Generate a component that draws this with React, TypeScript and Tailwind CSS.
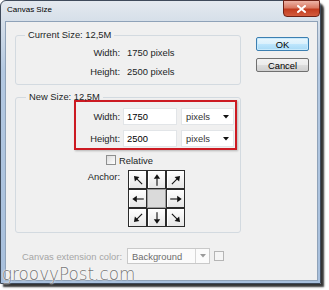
import React from "react";

const anchors: (number | null)[] = [-45, 0, 45, -90, null, 90, -135, 180, 135];

function Arrow({ deg }: { deg: number }) {
  return (
    <svg width="12" height="12" viewBox="0 0 12 12">
      <g transform={`rotate(${deg} 6 6)`}>
        <polygon points="6,0.3 9.2,4.8 2.8,4.8" fill="#111" />
        <rect x="5.45" y="4.4" width="1.1" height="7.4" fill="#111" />
      </g>
    </svg>
  );
}

function Caret({ color = "#111" }: { color?: string }) {
  return (
    <svg width="6" height="4" viewBox="0 0 6 4">
      <polygon points="0,0 6,0 3,3.5" fill={color} />
    </svg>
  );
}

export default function App() {
  return (
    <div className="relative w-[329px] h-[290px] bg-white overflow-hidden font-['Liberation_Sans',Arial,sans-serif] text-[9.4px] leading-[11px] text-[#1b1f26]">
      {/* window frame */}
      <div className="w-[321px] h-[284px] border border-[#3f4b5b] rounded-t-[6px] bg-[linear-gradient(180deg,#e4e9ef_0px,#d6dfe9_20px,#b3c8e1_70px,#a7bfdc_100%)] shadow-[3px_3px_2px_rgba(0,0,0,0.8)] flex flex-col">
        {/* title bar */}
        <div className="h-[20px] flex justify-between items-start">
          <span className="pl-[6px] pt-[4px] text-[8px] leading-[10px] text-black">Canvas Size</span>
          <div className="-mt-[1px] w-[37px] h-[17px] rounded-b-[4px] border border-[#6e2216] bg-[linear-gradient(180deg,#edb3a6_0%,#d97a63_45%,#c23c1f_55%,#d35c3d_100%)] flex items-center justify-center">
            <svg width="9" height="8" viewBox="0 0 9 8">
              <path d="M1 1 L8 7 M8 1 L1 7" stroke="#fff" strokeWidth="2" strokeLinecap="square" />
            </svg>
          </div>
        </div>

        {/* client area */}
        <div className="ml-[4px] w-[313px] h-[260px] border border-[#8fa2b8] bg-[#f0f0f0] flex flex-col pl-[9px] pt-[8px]">
          <div className="flex items-start">
            {/* Current size */}
            <fieldset className="w-[226px] h-[55px] border border-[#d3dae0] rounded-[3px]">
              <legend className="ml-[9px] px-[3px] leading-[10px]">Current Size: 12,5M</legend>
              <div className="mt-[3px] flex flex-col">
                <div className="h-[19px] flex items-center">
                  <span className="w-[104px] text-right">Width:</span>
                  <span className="ml-[7px]">1750 pixels</span>
                </div>
                <div className="h-[19px] flex items-center">
                  <span className="w-[104px] text-right">Height:</span>
                  <span className="ml-[7px]">2500 pixels</span>
                </div>
              </div>
            </fieldset>

            {/* buttons */}
            <div className="ml-[15px] mt-[7px] flex flex-col gap-[7px]">
              <div className="w-[53px] h-[14px] rounded-[2px] border border-[#3c7fb1] bg-[linear-gradient(180deg,#eaf6fd_0%,#d9f0fc_50%,#bee6fd_51%,#a7d9f5_100%)] shadow-[inset_0_0_0_1px_#c8e9fb] flex items-center justify-center text-black">
                OK
              </div>
              <div className="w-[53px] h-[14px] rounded-[2px] border border-[#707070] bg-[linear-gradient(180deg,#f2f2f2_0%,#ebebeb_50%,#dddddd_51%,#cfcfcf_100%)] flex items-center justify-center text-black">
                Cancel
              </div>
            </div>
          </div>

          {/* New size */}
          <fieldset className="mt-[7px] w-[226px] h-[141px] border border-[#d3dae0] rounded-[3px]">
            <legend className="ml-[10px] px-[3px] leading-[10px]">New Size: 12,5M</legend>

            <div className="-mt-[2px] ml-[58px] w-[163px] h-[50px] border-2 border-[#cc1a22] shadow-[1px_1px_2px_rgba(0,0,0,0.25)] flex flex-col gap-[5px] pt-[6px]">
              {[
                ["Width:", "1750"],
                ["Height:", "2500"],
              ].map(([label, value]) => (
                <div key={label} className="flex items-center">
                  <span className="w-[44px] text-right">{label}</span>
                  <div className="ml-[3px] w-[54px] h-[17px] bg-white border border-[#e2e5e8] flex items-center pl-[3px] text-black">
                    {value}
                  </div>
                  <div className="ml-[4px] w-[53px] h-[17px] bg-white border border-[#e2e5e8] flex items-center justify-between pl-[4px] pr-[4px] text-[#333]">
                    <span>pixels</span>
                    <Caret />
                  </div>
                </div>
              ))}
            </div>

            <div className="mt-[5px] ml-[90px] h-[10px] flex items-center">
              <div className="w-[10px] h-[10px] border border-[#8e8f8f] bg-[linear-gradient(135deg,#dcdcdc,#ffffff)]" />
              <span className="ml-[3px]">Relative</span>
            </div>

            <div className="mt-[5px] flex items-start">
              <span className="w-[104px] text-right pt-[1px]">Anchor:</span>
              <div className="ml-[8px] grid grid-cols-[19px_19px_19px] grid-rows-[19px_19px_19px]">
                {anchors.map((deg, i) =>
                  deg === null ? (
                    <div key={i} className="border border-[#9a9a9a] bg-[#dadada]" />
                  ) : (
                    <div
                      key={i}
                      className="border border-[#2b2b2b] bg-[linear-gradient(180deg,#ffffff,#e6e6e6)] shadow-[inset_1px_1px_0_#fff] flex items-center justify-center"
                    >
                      <Arrow deg={deg} />
                    </div>
                  )
                )}
              </div>
            </div>
          </fieldset>

          {/* extension colour */}
          <div className="mt-[15px] flex items-center">
            <span className="ml-[7px] text-[#a6a6a6]">Canvas extension color:</span>
            <div className="ml-[5px] w-[83px] h-[16px] border border-[#c9c9c9] bg-[#fbfbfb] flex">
              <span className="w-[67px] pl-[4px] flex items-center text-[#6d6d6d]">Background</span>
              <div className="flex-1 border-l border-[#d6d6d6] flex items-center justify-center">
                <Caret color="#9a9a9a" />
              </div>
            </div>
            <div className="ml-[4px] w-[10px] h-[10px] border border-[#b5b5b5] bg-[#f5f5f5]" />
          </div>
        </div>
      </div>

      {/* watermark */}
      <span className="absolute left-[2px] top-[264px] font-['DejaVu_Sans',sans-serif] font-extralight text-[16.8px] leading-[20px] text-[#767676] [text-shadow:0_0_2px_#fff,0_0_1px_#fff]">
        groovyPost.com
      </span>
    </div>
  );
}
